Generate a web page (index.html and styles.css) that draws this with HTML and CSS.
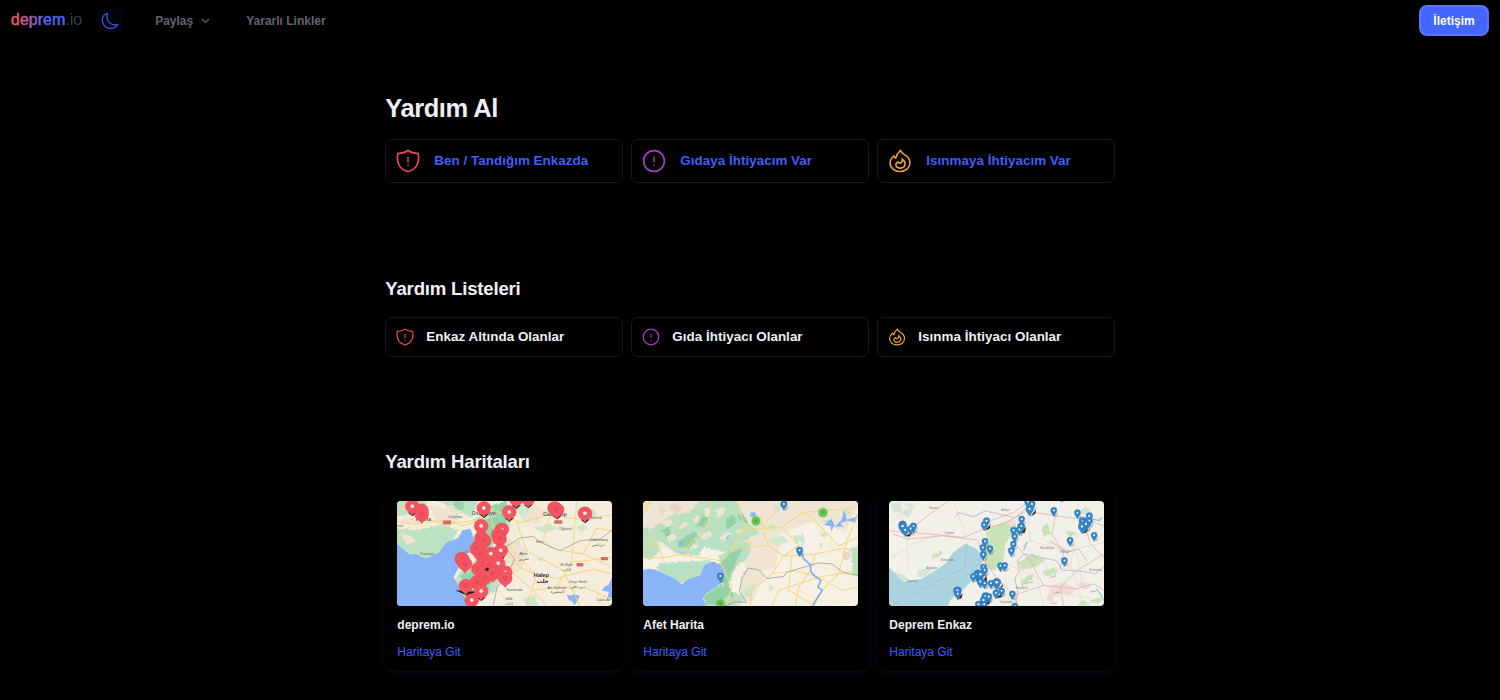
FILE: index.html
```html
<!DOCTYPE html>
<html lang="tr">
<head>
<meta charset="utf-8">
<title>deprem.io</title>
<link rel="stylesheet" href="styles.css">
</head>
<body>
<svg class="defs" aria-hidden="true">
  <defs>
    <symbol id="shield" viewBox="0 0 24 24"><path d="M12 1.500C9 3.700 6 4.300 1.800 4.600C.2 12.500 3 20.500 12 22.500C21 20.500 23.800 12.500 22.200 4.600C18 4.300 15 3.700 12 1.500Z"/><path class="thin" d="M12 7.700v5.800M12 15.800v1.200"/></symbol>
    <symbol id="circle" viewBox="0 0 24 24"><circle cx="12" cy="12" r="10.400"/><path class="thin" d="M12 7.500v5.800M12 15.700v1.200"/></symbol>
    <symbol id="fire" viewBox="0 0 24 24"><path d="M12.400 1.500C9.800 3.800 8.400 6.200 7.700 9.100C6.900 8.600 6.300 7.900 5.900 7C3.500 9 2.100 11.500 2.100 14C2.100 19 6.500 22.500 12.200 22.500C18 22.500 22 18.600 22 13.700C22 8.700 18.500 6.800 15.800 5.200C14.300 4.200 13.200 2.900 12.400 1.500Z"/><path d="M14.300 10.300C14.600 12.200 13.600 13.600 12 14.300C11.200 14.200 10.700 13.700 10.300 12.900C8.600 13.500 7.700 14.800 7.900 16.200C8.300 18.300 10 19.200 12.400 19.100C15.300 19 17.200 17.200 17 14.700C16.800 12.700 16 11.300 14.300 10.300Z"/></symbol>
    <symbol id="red-pin" viewBox="0 0 44 50" overflow="visible"><path d="M23 50L9 39L36 38Z" fill="#111"/><path d="M22 48C19 43 17 41 11 37.500A21 20 0 1 1 33 37.500C27 41 25 43 22 48Z" fill="#f75361" stroke="#e04a56" stroke-width="1.200"/><circle cx="22" cy="20" r="7" fill="#fbe6df" stroke="#c94751" stroke-width="2"/></symbol>
    <symbol id="red-pin-full" viewBox="0 0 44 50" overflow="visible"><path d="M22 48C19 43 17 41 11 37.500A21 20 0 1 1 33 37.500C27 41 25 43 22 48Z" fill="#f75361" stroke="#dc4854" stroke-width="1.200"/><circle cx="22" cy="20" r="6" fill="#e9505c" stroke="#c53f4a"/></symbol>
    <symbol id="blue-pin" viewBox="0 0 20 30" overflow="visible"><path d="M10 29L25 16L19 29Z" fill="#333" opacity=".3"/><path d="M10 30C8 23 0 18 0 10A10 10 0 0 1 20 10C20 18 12 23 10 30Z" fill="#3585c8" stroke="#2a76b4"/><circle cx="10" cy="10" r="3.200" fill="#fff"/></symbol>
    <filter id="soft"><feTurbulence type="fractalNoise" baseFrequency=".14" numOctaves="3" seed="4" result="n"/><feDisplacementMap in="SourceGraphic" in2="n" scale="12" xChannelSelector="R" yChannelSelector="G"/><feGaussianBlur stdDeviation=".4"/></filter>
    <filter id="coast"><feGaussianBlur stdDeviation=".4"/></filter>
  </defs>
</svg>

<header class="navbar">
  <a class="logo"><span class="logo-name">deprem</span><span class="logo-tld">.io</span></a>
  <button class="theme" aria-label="Tema"><svg viewBox="0 0 18 18"><path d="M6.400 1.500C4.500 9.500 10 14 16.600 12.500C14.800 15.400 11.700 16.900 8.300 16.300C3.700 15.500.9 11.500 1.300 7.400C1.600 4.500 3.600 2.100 6.400 1.500Z"/></svg></button>
  <nav class="links">
    <a class="share">Paylaş<svg viewBox="0 0 9 6"><path d="M1 1l3.500 3.500L8 1"/></svg></a>
    <a>Yararlı Linkler</a>
  </nav>
  <button class="contact">İletişim</button>
</header>

<main class="page">
  <section class="help">
    <h1>Yardım Al</h1>
    <div class="grid">
      <a class="tile red"><svg><use href="#shield"/></svg><span>Ben / Tandığım Enkazda</span></a>
      <a class="tile purple"><svg><use href="#circle"/></svg><span>Gıdaya İhtiyacım Var</span></a>
      <a class="tile orange"><svg><use href="#fire"/></svg><span>Isınmaya İhtiyacım Var</span></a>
    </div>
  </section>

  <section class="lists">
    <h2>Yardım Listeleri</h2>
    <div class="grid">
      <a class="tile small red"><svg><use href="#shield"/></svg><span>Enkaz Altında Olanlar</span></a>
      <a class="tile small purple"><svg><use href="#circle"/></svg><span>Gıda İhtiyacı Olanlar</span></a>
      <a class="tile small orange"><svg><use href="#fire"/></svg><span>Isınma İhtiyacı Olanlar</span></a>
    </div>
  </section>

  <section class="maps">
    <h2>Yardım Haritaları</h2>
    <div class="grid">
      <article class="card">
        <svg class="map" viewBox="52 30 644 317" preserveAspectRatio="none">
          <rect x="52" y="30" width="644" height="317" fill="#f5eedf"/>
          <g filter="url(#soft)">
            <path fill="#bce2c4" d="M40 20H150L120 70L40 74ZM40 112L110 118L190 100L235 118L218 150L180 190L140 210L90 196L40 172ZM160 20H300L275 80L215 50ZM280 85L330 60L395 55L390 110L340 160L365 240L350 300L250 360L225 270L245 240L300 200Z"/>
            <path fill="#97d2a9" d="M310 90L385 60L380 110L340 145L318 195L340 245L325 300L260 290L240 255L300 230L290 160ZM330 45L380 30L400 65L350 80ZM225 20l30 20-10 20-25-12z"/>
            <path fill="#d0e7cb" d="M405 45l35-15 20 35-30 25zM460 110l50-12 24 15-40 15zM390 165l25-14 12 20-28 17zM585 102l38 8-20 15zM470 205l23-8-5 18zM430 322l35-10 10 35h-35zM605 70l35-18 10 20-23 20z"/>
            <path fill="#efe2ce" d="M150 42l40 12 30-15 25 40-35 30-42-15zM385 138l60 40-20 60-40 20-20-70zM460 35l36 25-20 40-45-5zM62 83l30-10 40 20-70 12zM60 125l30 8 20 20-30 8z"/>
          </g>
          <path filter="url(#coast)" fill="#8ab4f8" d="M52 160L90 192L108 190L138 204L175 188L200 156L235 142L248 118L272 114L285 150L262 190L240 225L222 260L240 292L268 347H52ZM560 312l14 4 8-5 18 6-16 28-8-12-9-3zM696 260v64l-13-5 4-14-22-5 9-12 12-5z"/>
          <path class="road" d="M52 92L105 100L190 88L250 104L300 90L330 50L420 95L510 72L590 84L696 72M52 142L90 105M70 30L130 80L190 100L290 88M330 60L350 160L375 225L460 300L530 290L575 215L696 200M375 145L405 190L470 254L440 347M470 254L530 264L640 235L696 250M460 300L500 347M530 290L620 292L696 328M575 215L590 30M510 72L490 150L520 175L610 190L696 230M610 190L650 112L696 120M350 160L420 230L470 254M410 90L440 180L550 240L600 347M52 74L85 30"/>
          <path class="road light" d="M390 30L405 140L470 150L560 170L620 130M420 230L350 290L390 347M540 260L560 347M630 235L665 347M475 50L560 120M590 85L680 170"/>
          <path class="border" d="M340 347L352 290L388 240L405 205L375 170L420 142L460 137L482 155L540 180L600 150L660 145L696 118"/>
          <g class="labels">
            <text x="206" y="82">Ceyhan</text><text x="122" y="194">Karataş</text><text x="276" y="72" class="town">Osmaniye</text><text x="108" y="90" class="town">Adana</text><text x="52" y="108">sus</text>
            <text x="489" y="74" class="town">Gaziantep</text><text x="536" y="117">Oğuzeli</text><text x="630" y="84">Birecik</text><text x="468" y="157">Kilis</text><text x="630" y="152">Çobanbey</text><text x="635" y="165">جرابلس</text>
            <text x="418" y="193">Afrin</text><text x="416" y="208">عفرين</text><text x="542" y="226">El Bab</text><text x="548" y="241">الباب</text><text x="461" y="260" class="city">Halep</text><text x="470" y="279" class="city">حلب</text>
            <text x="567" y="279">Dayr Hafir</text><text x="573" y="293">دير حافر</text><text x="503" y="295">As-Safirah</text><text x="512" y="308">السفيرة</text><text x="380" y="303">Sarmada</text><text x="376" y="330">Idlib</text><text x="375" y="344">إدلب</text><text x="228" y="305">Samandağ</text><text x="650" y="331">Lake As</text><text x="257" y="187">İsk</text>
          </g>
          <g class="shields"><rect x="190" y="89" width="24" height="12" rx="2"/><rect x="523" y="88" width="24" height="11" rx="2"/><rect x="590" y="217" width="20" height="11" rx="2"/><rect x="663" y="199" width="21" height="10" rx="2"/></g>
          <g>
            <use href="#red-pin" x="76" y="26" width="44" height="50"/><use href="#red-pin-full" x="103" y="38" width="44" height="50"/><use href="#red-pin-full" x="104" y="50" width="44" height="50"/><use href="#red-pin" x="290" y="31" width="44" height="50"/><use href="#red-pin" x="366" y="43" width="44" height="50"/><use href="#red-pin" x="387" y="4" width="44" height="50"/><use href="#red-pin" x="423" y="2" width="44" height="50"/><use href="#red-pin" x="506" y="36" width="50" height="50"/><use href="#red-pin-full" x="502" y="31" width="44" height="50"/><use href="#red-pin-full" x="507" y="35" width="44" height="50"/><use href="#red-pin" x="593" y="47" width="44" height="50"/>
            <use href="#red-pin" x="282" y="85" width="44" height="50"/><use href="#red-pin" x="344" y="96" width="44" height="50"/><use href="#red-pin-full" x="334" y="111" width="44" height="50"/><use href="#red-pin-full" x="337" y="124" width="44" height="50"/><use href="#red-pin-full" x="283" y="121" width="44" height="50"/><use href="#red-pin-full" x="291" y="130" width="44" height="50"/><use href="#red-pin-full" x="277" y="145" width="44" height="50"/><use href="#red-pin-full" x="269" y="155" width="44" height="50"/><use href="#red-pin-full" x="280" y="169" width="44" height="50"/><use href="#red-pin" x="341" y="159" width="44" height="50"/><use href="#red-pin" x="311" y="169" width="44" height="50"/>
            <use href="#red-pin" x="224" y="184" width="44" height="50"/><use href="#red-pin-full" x="226" y="187" width="44" height="50"/><use href="#red-pin-full" x="234" y="200" width="44" height="50"/><use href="#red-pin-full" x="288" y="199" width="44" height="50"/><use href="#red-pin" x="333" y="198" width="44" height="50"/><use href="#red-pin-full" x="307" y="203" width="44" height="50"/><use href="#red-pin-full" x="274" y="215" width="44" height="50"/><use href="#red-pin-full" x="294" y="222" width="44" height="50"/><use href="#red-pin-full" x="318" y="228" width="44" height="50"/><use href="#red-pin" x="354" y="225" width="44" height="50"/><use href="#red-pin-full" x="354" y="243" width="44" height="50"/><use href="#red-pin-full" x="294" y="241" width="44" height="50"/><use href="#red-pin-full" x="269" y="255" width="44" height="50"/><path d="M230 300l32 16 30-12z" fill="#171719"/><use href="#red-pin-full" x="236" y="266" width="44" height="50"/><use href="#red-pin" x="282" y="282" width="44" height="50"/><use href="#red-pin" x="254" y="309" width="44" height="50"/>
            <circle cx="322" cy="236" r="5" fill="#271b20"/>
          </g>
        </svg>
        <h3>deprem.io</h3>
        <a>Haritaya Git</a>
      </article>

      <article class="card">
        <svg class="map" viewBox="54 30 644 317" preserveAspectRatio="none">
          <rect x="54" y="30" width="644" height="317" fill="#f7f1e5"/>
          <g filter="url(#soft)">
            <path fill="#f0e5d5" d="M40 20H710L660 125L570 90L470 125L450 230L370 260L345 180L280 140L180 180L40 160ZM350 240l70 10-40 90h-35z"/>
            <path fill="#b9e0c2" d="M40 100L85 120L105 180L75 210L40 195ZM80 112L145 70L195 65L230 20H330L365 95L405 125L340 160L305 185L235 170L220 195L150 188L115 155L90 150ZM104 218L200 212L260 212L235 248L190 280L150 275L100 250L96 230ZM280 198L345 155L380 155L370 200L330 230L308 295L360 325L325 360H245L228 315L290 275ZM677 170h36v85h-30z"/>
            <path fill="#f0e5d5" d="M110 95l28-12 5 18-20 8zM160 108l22-17 9 10-21 15zM238 55l15-9 4 24-15 10zM275 55l25-8-9 27-18 5zM222 135l30-16 10 13-25 16zM285 143l20-22 12 9-20 22zM120 135l30-7 5 15-20 10zM205 85l14-14 6 10-15 18zM190 170l24-12 8 10-25 10zM330 120l22-8-5 18z"/>
            <path fill="#94d1a8" d="M160 150l48-28 12 12-26 38-35-5zM215 105l20-35 15 14-15 27zM300 90l24-20 10 27-30 18zM310 185l45-15-23 44-25 65 20 40-28-7-2-70-15-18zM235 320l52-38 25 22-25 35-42 5zM110 120l20-12 10 20-16 12zM340 65l15 7 18 29-30-14z"/>
            <path fill="#cde7cc" d="M350 302l40-27-12 40-28 10zM430 145l45-8 15 17-40 12zM415 108l30-11 5 18-25 7zM498 138l30-9 8 22-22 5zM585 125l32 4-25 13zM648 58l18-10 12 18-20 13zM430 282l17 10-12 15zM450 35l20 12-14 20-14-12zM580 155l15 7-11 12z"/>
            <path fill="#e7d6c6" d="M135 40l22-4 14 15-18 18-18-13zM100 45l25 12-18 19zM650 185q15-13 24 3 4 18-12 22-12-6-12-25z"/>
            <path fill="#8ab4f8" d="M155 163l22-15-7 15zM300 145l9-13 4 8zM158 190l20-7-3 8zM375 62l18 5-4 12-12-3z"/>
          </g>
          <path filter="url(#coast)" fill="#8ab4f8" d="M54 238Q80 229 105 244L150 265L170 281L190 266L225 255L238 224L265 213L288 225L297 244L292 275L242 310L232 325L245 347H54Z"/>
          <path d="M588 83l13 9 18-7 10 22 20-20 8-31 7 30 25-6 15-20-13 35-24-5-22 7 9 11-28-2-8 15-2-15-22-4 14-7z" fill="#8ab4f8"/>
          <path class="road" d="M54 198L108 202L165 192L245 204L290 210L320 182L370 170L430 164L475 196L570 190L660 172L698 188M54 48L78 30L54 72M54 140L105 175L115 210M320 182L350 115L470 110L530 65L698 50M285 215L320 290L305 347M530 65L560 80L640 165L698 140M430 164L410 110L475 30M475 196L440 250L380 300L375 347M440 250L510 240L580 260L698 240M500 196L490 300L570 347M570 190L555 240L520 290L510 347M580 260L650 300L698 290M698 70L665 150L640 250L590 300L555 347M470 110L520 165L475 196M260 30L250 100L190 165L165 192M370 170L358 100L330 30M54 180L90 155L70 120M580 260L460 300L440 347"/>
          <path class="road light" d="M80 110L150 75L240 40M250 100L330 150L370 170M440 120L400 250L345 290M560 80L600 160L690 210M500 196L670 260M480 280L580 330L698 335M620 130L610 220L698 275M160 75L130 150L165 192"/>
          <path class="border" d="M298 347L328 335H363L343 303L350 265L368 232L400 238L425 264L475 258L485 245L535 230L580 217L620 220L655 246L698 255"/>
          <path d="M528 185L536 205L555 222L557 244L568 256L587 270L578 290L591 300L575 325L563 347" fill="none" stroke="#83aef5" stroke-width="5"/><path d="M530 125L536 145L528 185" fill="none" stroke="#a3bee9" stroke-width="2"/>
          <g class="cluster"><ellipse cx="395" cy="91" rx="17" ry="18" opacity=".25"/><circle cx="392" cy="90" r="13"/><circle cx="593" cy="65" r="17" opacity=".25"/><circle cx="593" cy="65" r="13"/><circle cx="286" cy="342" r="17" opacity=".25"/><circle cx="286" cy="339" r="12"/></g>
          <g class="counts"><text x="389" y="94">4</text><text x="590" y="69">2</text><text x="283" y="343">6</text></g>
          <use href="#blue-pin" x="466" y="29" width="20" height="30"/><use href="#blue-pin" x="513" y="168" width="20" height="31"/><use href="#blue-pin" x="276" y="246" width="20" height="31"/>
        </svg>
        <h3>Afet Harita</h3>
        <a>Haritaya Git</a>
      </article>

      <article class="card">
        <svg class="map" viewBox="57 30 644 317" preserveAspectRatio="none">
          <rect x="57" y="30" width="644" height="317" fill="#f1f0e9"/>
          <path filter="url(#coast)" fill="#abd3df" d="M57 230L100 274L155 265L195 240L225 220L250 185L285 158L320 175L338 200L325 250L282 295L240 330L233 347H57Z"/>
          <g filter="url(#soft)">
            <path fill="#c3dfae" d="M345 115L425 83L440 110L405 160L398 215L370 242L345 225L345 180L352 150ZM185 195l35-17-10 16-20 8zM515 110l15-13 12 30-22 10zM585 120l35 6-22 13zM445 215l40-25 40 18-20 17-48 15zM515 245l35-15 15 15-38 13zM450 270l45-25-10 20-30 25zM620 345l15-15 25 10-15 7zM655 332l40-12-10 20z" opacity=".85"/>
            <path fill="#d4e6d3" d="M62 40l28-8 8 25-25 10zM85 62l50-12-20 30zM95 35l38 5-8 14zM455 165l20-15-12 25zM65 240l38 15 9 12-15 3zM618 65l30-18 18 17-30 6zM145 240l40-8-15 25-30 2z"/>
            <path fill="#f1dcd5" d="M540 285l42-12 38 23-25 20-20-7-24 11-5 18-18-8zM110 125l25-5 5 16-28 4zM410 92l20-8 10 14-20 8zM620 280l35-5 10 15-22 8z"/>
          </g>
          <path class="osm" d="M57 120L160 128L280 140L340 115L400 100L470 60L555 75L640 85L701 105M120 120L165 80L235 30M70 130L115 145L220 135L325 148L335 200L338 275M340 115L360 90L430 65L480 30M335 200L370 250L430 315L440 347M430 315L520 285L570 290L620 240L701 190M570 290L580 347M520 285L480 210L440 165M555 75L545 130L580 185L570 235M640 85L660 160L701 200M570 290L620 295L670 280L701 300"/>
          <path class="osm faint" d="M57 100L120 50L150 30M250 30L280 110L285 140M90 80L130 120M470 60L480 150L590 180L701 155M410 220L500 260L520 347M590 310L690 330M620 130L600 220L640 347M525 150L620 190L640 300M110 145L115 240M57 205L130 160L205 130"/>
          <path d="M290 155L285 230L60 347M200 347L335 210M57 320L95 347" fill="none" stroke="#93aebc" stroke-width="1.500" opacity=".7"/>
          <path class="osm-border" d="M438 347L442 300L434 265L448 240L442 210L460 190L525 203L558 210L575 238L635 242L675 250L701 228M540 150L590 185L625 175L650 210M255 80L265 65L310 78L345 60L435 80L470 50"/>
          <path d="M471 153l-10 24M678 295l15 20 8 17M695 80l-8 9-20-4" fill="none" stroke="#94c8df" stroke-width="4"/>
          <g class="labels osm-labels"><text x="178" y="55">Kozan</text><text x="222" y="129">Ceyhan</text><text x="211" y="212">Yumurtalık</text><text x="110" y="275">Karataş</text><text x="393" y="61">Bahçe</text><text x="510" y="174">Musabeyli</text><text x="570" y="188">Elbeyli</text><text x="465" y="277">عفرين</text><text x="657" y="240">Karkamış</text><text x="538" y="258">اعزاز</text><text x="551" y="309">حلب</text><text x="540" y="341">إدلب</text><text x="437" y="296">Reyhanlı</text><text x="388" y="339">Yayladağı</text><text x="660" y="306">منبج</text><text x="168" y="235">Akyatan</text></g>
          <g fill="#111" opacity=".85"><path d="M482 75l16-20-3 14zM446 128l22-20-4 17zM634 126l22-13-9 13zM106 136l20-10-7 11zM377 297q22-8 21-22v14zM338 280l10-28 3 21zM263 325l14-16-2 14zM377 322l20-14-3 13zM340 345l24-23-7 20zM344 118l17-16-2 11z"/></g>
          <g>
            <use href="#blue-pin" x="86" y="90" width="23" height="33"/><use href="#blue-pin" x="84" y="94" width="28" height="36"/><use href="#blue-pin" x="120" y="96" width="20" height="30"/><use href="#blue-pin" x="112" y="104" width="20" height="28"/><use href="#blue-pin" x="93" y="107" width="25" height="31"/>
            <use href="#blue-pin" x="339" y="80" width="20" height="30"/><use href="#blue-pin" x="332" y="92" width="20" height="28"/><use href="#blue-pin" x="463" y="22" width="20" height="30"/><use href="#blue-pin" x="475" y="29" width="20" height="30"/><use href="#blue-pin" x="466" y="43" width="24" height="33"/><use href="#blue-pin" x="541" y="49" width="19" height="28"/><use href="#blue-pin" x="564" y="6" width="19" height="28"/><use href="#blue-pin" x="612" y="56" width="19" height="28"/>
            <use href="#blue-pin" x="445" y="75" width="19" height="28"/><use href="#blue-pin" x="441" y="96" width="24" height="33"/><use href="#blue-pin" x="421" y="108" width="19" height="30"/><use href="#blue-pin" x="438" y="107" width="19" height="28"/><use href="#blue-pin" x="424" y="127" width="19" height="28"/><use href="#blue-pin" x="420" y="151" width="19" height="27"/><use href="#blue-pin" x="413" y="170" width="21" height="29"/>
            <use href="#blue-pin" x="647" y="65" width="20" height="30"/><use href="#blue-pin" x="624" y="79" width="28" height="36"/><use href="#blue-pin" x="644" y="80" width="25" height="30"/><use href="#blue-pin" x="630" y="87" width="32" height="37"/><use href="#blue-pin" x="622" y="96" width="26" height="33"/><use href="#blue-pin" x="662" y="124" width="19" height="28"/><use href="#blue-pin" x="590" y="139" width="19" height="29"/><use href="#blue-pin" x="573" y="200" width="19" height="28"/>
            <use href="#blue-pin" x="335" y="142" width="19" height="29"/><use href="#blue-pin" x="329" y="160" width="19" height="30"/><use href="#blue-pin" x="350" y="164" width="19" height="28"/><use href="#blue-pin" x="329" y="182" width="21" height="29"/><use href="#blue-pin" x="381" y="216" width="20" height="28"/><use href="#blue-pin" x="394" y="215" width="19" height="28"/>
            <use href="#blue-pin" x="330" y="220" width="20" height="29"/><use href="#blue-pin" x="334" y="229" width="19" height="28"/><use href="#blue-pin" x="307" y="238" width="32" height="39"/><use href="#blue-pin" x="316" y="240" width="30" height="34"/><use href="#blue-pin" x="299" y="248" width="21" height="28"/><use href="#blue-pin" x="320" y="263" width="21" height="30"/><use href="#blue-pin" x="334" y="269" width="19" height="27"/><use href="#blue-pin" x="353" y="269" width="19" height="27"/><use href="#blue-pin" x="365" y="263" width="29" height="37"/>
            <use href="#blue-pin" x="248" y="289" width="28" height="36"/><use href="#blue-pin" x="253" y="301" width="20" height="28"/><use href="#blue-pin" x="385" y="292" width="19" height="28"/><use href="#blue-pin" x="367" y="298" width="20" height="28"/><use href="#blue-pin" x="417" y="301" width="19" height="28"/><use href="#blue-pin" x="332" y="306" width="29" height="36"/><use href="#blue-pin" x="346" y="309" width="20" height="29"/><use href="#blue-pin" x="328" y="319" width="24" height="31"/><use href="#blue-pin" x="314" y="332" width="22" height="29"/><use href="#blue-pin" x="331" y="332" width="22" height="29"/><use href="#blue-pin" x="424" y="338" width="20" height="28"/>
          </g>
        </svg>
        <h3>Deprem Enkaz</h3>
        <a>Haritaya Git</a>
      </article>
    </div>
  </section>
</main>
</body>
</html>
```
FILE: styles.css
```css
* { box-sizing: border-box; }
body { margin: 0; height: 700px; overflow: hidden; background: #000; color: #eff0f4; font-family: "Liberation Sans", Arial, sans-serif; }
.defs { position: absolute; width: 0; height: 0; }
h1, h2, h3 { margin: 0; font-weight: 700; }
button { font-family: inherit; padding: 0; }

.navbar { display: flex; align-items: center; height: 41px; padding: 0 11px; }
.logo { font-size: 16px; line-height: 20px; padding-bottom: 1px; }
.logo-name { color: transparent; background: linear-gradient(100deg, #f94d5d 0%, #f05166 15%, #4765ff 67%); background-clip: text; -webkit-background-clip: text; -webkit-text-stroke: .6px transparent; }
.logo-tld { color: #3a3c47; }
.theme { display: flex; align-items: center; justify-content: center; width: 24px; height: 24px; margin-left: 16px; border: 0; border-radius: 3px; background: #03040b; }
.theme svg { width: 18px; height: 18px; fill: none; stroke: #405aef; stroke-width: 1.2; }
.links { display: flex; align-items: center; gap: 36px; margin-left: 33px; padding-top: 1px; color: #62646e; font-size: 12px; font-weight: 700; }
.share { display: flex; align-items: center; gap: 8px; }
.share svg { width: 9px; height: 6px; fill: none; stroke: #62646e; stroke-width: 1.1; }
.contact { width: 70px; height: 31px; margin-left: auto; border: 2px solid #5c73fb; border-radius: 8px; background: #4465ff; color: #fff; font-size: 12px; font-weight: 700; }

.page { width: 730px; margin-left: 385.3px; }
.help { padding-top: 52px; }
.lists { padding-top: 94px; }
.maps { padding-top: 93px; }
h1 { height: 46px; font-size: 25.5px; line-height: 31px; letter-spacing: -.45px; }
h2 { height: 40px; font-size: 18.6px; line-height: 23px; letter-spacing: -.2px; }
.grid { display: grid; grid-template-columns: repeat(3, 238px); gap: 8px; }

.tile { display: flex; align-items: center; gap: 14px; height: 44px; padding: 0 10px; border: 1px solid #18181a; border-radius: 7px; color: #405eff; font-size: 13.4px; font-weight: 700; letter-spacing: .04px; }
.tile span { padding-bottom: 1px; }
.tile svg { width: 24px; height: 24px; fill: none; stroke: currentColor; stroke-width: 1.6; }
.tile.small { height: 40px; gap: 12px; color: #eff0f4; }
.tile.small span { padding-bottom: 2px; }
.tile.small svg { width: 18px; height: 18px; }
.red svg { stroke: #f04a59; }
.purple svg { stroke: #a43dc7; }
.orange svg { stroke: #f0a039; }
.thin { stroke-width: 1.4; }

.maps h2 { height: 39.5px; }
.card { height: 181px; padding: 11px 11px 0 12px; border-radius: 11px; background: #000; box-shadow: 0 3px 9px 1px #080810; }
.map { display: block; width: 215px; height: 105px; border-radius: 4px; }
.card h3 { margin-top: 11px; font-size: 12px; line-height: 16px; }
.card a { display: block; margin-top: 11px; color: #3f5dff; font-size: 12px; line-height: 16px; }

.road { fill: none; stroke: #f5d781; stroke-width: 3; stroke-linejoin: round; }
.road.light { stroke: #f6e3ab; stroke-width: 1.5; }
.border { fill: none; stroke: #8f8f8c; stroke-width: 2; stroke-linejoin: round; }
.labels { fill: #5a5e5a; font-size: 12px; font-family: "Liberation Sans", "DejaVu Sans", sans-serif; }
.town { font-size: 15px; font-weight: 700; }
.city { fill: #303432; font-size: 17px; font-weight: 700; }
.shields { fill: #d96964; }
.cluster { fill: #67c448; }
.counts { fill: #285a20; font-size: 10px; }
.osm { fill: none; stroke: #e4a4ac; stroke-width: 2; stroke-linejoin: round; }
.osm.faint { stroke: #e8cdb6; stroke-width: 1.5; }
.osm-border { fill: none; stroke: #b6a3b8; stroke-width: 2; }
.osm-labels { fill: #807d80; font-size: 9px; }
```
